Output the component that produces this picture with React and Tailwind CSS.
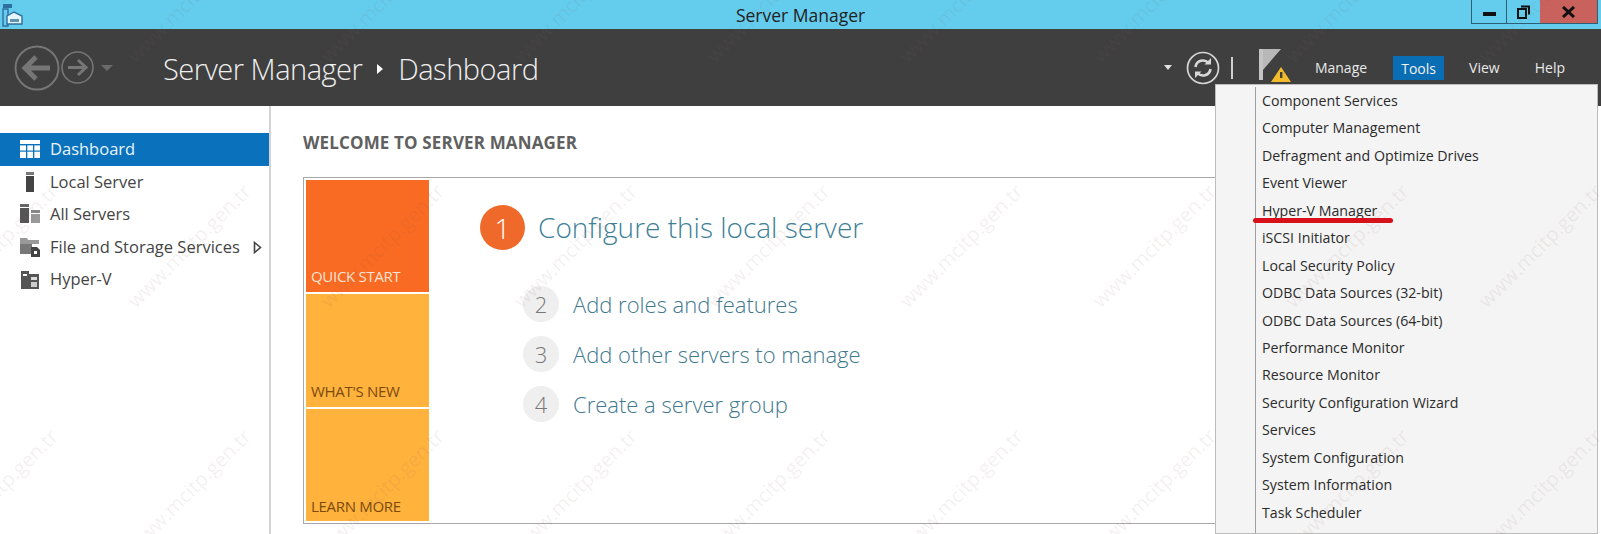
const sansFont = "font-['Open_Sans','Noto_Sans',sans-serif]";

const navItems = [
    { label: "Dashboard", icon: "dashboard", active: true },
    { label: "Local Server", icon: "server" },
    { label: "All Servers", icon: "servers" },
    { label: "File and Storage Services", icon: "files", arrow: true },
    { label: "Hyper-V", icon: "hyperv" },
];

const toolItems = [
    "Component Services",
    "Computer Management",
    "Defragment and Optimize Drives",
    "Event Viewer",
    "Hyper-V Manager",
    "iSCSI Initiator",
    "Local Security Policy",
    "ODBC Data Sources (32-bit)",
    "ODBC Data Sources (64-bit)",
    "Performance Monitor",
    "Resource Monitor",
    "Security Configuration Wizard",
    "Services",
    "System Configuration",
    "System Information",
    "Task Scheduler",
];

const steps = [
    { n: 2, label: "Add roles and features" },
    { n: 3, label: "Add other servers to manage" },
    { n: 4, label: "Create a server group" },
];

function NavIcon({ name, active }) {
    const c = active ? "#ffffff" : "#555555";
    if (name === "dashboard") {
        return (
            <svg width="20" height="20" viewBox="0 0 20 20">
                <rect x="0" y="1" width="20" height="18" fill={c} />
                <g fill="#0a72bd">
                    <rect x="0" y="5" width="20" height="1.4" />
                    <rect x="0" y="11.5" width="20" height="1.2" />
                    <rect x="6" y="5" width="1.3" height="14" />
                    <rect x="13" y="5" width="1.3" height="14" />
                </g>
            </svg>
        );
    }
    if (name === "server") {
        return (
            <svg width="20" height="20" viewBox="0 0 20 20">
                <rect x="6" y="0" width="8" height="3" fill="#777777" />
                <rect x="6" y="4" width="8" height="16" fill="#444444" />
            </svg>
        );
    }
    if (name === "servers") {
        return (
            <svg width="20" height="20" viewBox="0 0 20 20">
                <rect x="0" y="0" width="9" height="3" fill="#666666" />
                <rect x="0" y="4" width="9" height="15" fill="#555555" />
                <rect x="11" y="6" width="9" height="3" fill="#888888" />
                <rect x="11" y="10" width="9" height="9" fill="#999999" />
            </svg>
        );
    }
    if (name === "files") {
        return (
            <svg width="20" height="20" viewBox="0 0 20 20">
                <path d="M0 1h7l1 2h11v4H0z" fill="#999999" />
                <rect x="0" y="7" width="12" height="10" fill="#777777" />
                <path d="M11 10h6l3 3v7h-9z" fill="#444444" />
                <rect x="14" y="14" width="3" height="3" fill="#ffffff" />
            </svg>
        );
    }
    return (
        <svg width="20" height="20" viewBox="0 0 20 20">
            <rect x="1" y="1" width="8" height="18" fill="#555555" />
            <rect x="9" y="4" width="10" height="15" fill="#555555" />
            <rect x="3" y="4" width="4" height="2" fill="#ffffff" />
            <rect x="11" y="7" width="6" height="3" fill="#dddddd" />
            <rect x="11" y="12" width="6" height="5" fill="#cccccc" />
        </svg>
    );
}

function AppIcon() {
    return (
        <svg width="24" height="26" viewBox="0 0 24 26" className="mt-[2px]">
            <rect x="1" y="2" width="9" height="4" fill="#2f6f9f" />
            <path d="M1 7h5v17H1z" fill="none" stroke="#2f6f9f" strokeWidth="1.4" />
            <path d="M5 14l7-4 8 4v8H5z" fill="#e8f6fb" stroke="#2f6f9f" strokeWidth="1.4" />
            <rect x="8" y="17" width="9" height="3" fill="#5f93b0" />
        </svg>
    );
}

function BackButton() {
    return (
        <svg width="46" height="46" viewBox="0 0 46 46" fill="none" stroke="#767676">
            <circle cx="23" cy="23" r="21.5" strokeWidth="2" />
            <path d="M36 23H12M22 12 11 23l11 11" strokeWidth="5" />
        </svg>
    );
}

function ForwardButton() {
    return (
        <svg width="33" height="33" viewBox="0 0 33 33" fill="none" stroke="#767676">
            <circle cx="16.5" cy="16.5" r="15.5" strokeWidth="1.6" />
            <path d="M7 16.5h18M17 9l8 7.5-8 7.5" strokeWidth="3" />
        </svg>
    );
}

function RefreshButton() {
    return (
        <svg width="34" height="34" viewBox="0 0 34 34" fill="none" stroke="#d8d8d8">
            <circle cx="17" cy="17" r="15.5" strokeWidth="1.7" />
            <path d="M9.5 16a7.5 7.5 0 0 1 13-4" strokeWidth="2.6" />
            <path d="M24.5 18a7.5 7.5 0 0 1-13 4" strokeWidth="2.6" />
            <path d="M25 7v6.5h-6.5z" fill="#d8d8d8" stroke="none" />
            <path d="M9 27v-6.5h6.5z" fill="#d8d8d8" stroke="none" />
        </svg>
    );
}

function FlagIcon() {
    return (
        <svg width="36" height="34" viewBox="0 0 36 34">
            <rect x="1" y="1" width="4" height="31" fill="#c4c4c4" />
            <path d="M5 1h18L5 22z" fill="#b8b8b8" />
            <path d="M23 19l10 15H13z" fill="#f2bb2c" />
            <rect x="22" y="24" width="2.4" height="6" fill="#3f3f3f" />
        </svg>
    );
}

function Watermark() {
    return (
        <div className="absolute inset-0 overflow-hidden pointer-events-none z-30">
            <div className="grid grid-cols-[repeat(9,193px)] auto-rows-[245px] -ml-[100px] -mt-[122px]">
                {Array.from({ length: 36 }).map((_, i) => (
                    <div key={i} className="flex items-center justify-center">
                        <span
                            className={`-rotate-45 whitespace-nowrap text-[20px] text-[#8a6060]/10 ${sansFont}`}
                        >
                            www.mcitp.gen.tr
                        </span>
                    </div>
                ))}
            </div>
        </div>
    );
}

export default function App() {
    return (
        <div
            className={`relative w-[1601px] h-[534px] overflow-hidden bg-white flex flex-col ${sansFont}`}
        >
            {/* title bar */}
            <div className="relative h-[29px] shrink-0 bg-[#64cdee] flex items-start pl-[2px]">
                <AppIcon />
                <div className="absolute inset-x-0 top-[3px] text-center text-[17.5px] leading-[25px] text-[#222222]">
                    Server Manager
                </div>
                <div className="absolute right-[3px] top-0 flex h-[24px] border border-t-0 border-[#2d5f75]">
                    <div className="w-[35px] flex items-center justify-center border-r border-[#2d5f75]">
                        <div className="w-[13px] h-[4px] bg-[#111111] mt-[4px]" />
                    </div>
                    <div className="w-[33px] flex items-center justify-center">
                        <svg width="13" height="14" viewBox="0 0 13 14" fill="none" stroke="#111111">
                            <rect x="1" y="4" width="8" height="9" strokeWidth="2" />
                            <path d="M4 1.5h8v8" strokeWidth="2" />
                        </svg>
                    </div>
                    <div className="w-[57px] bg-[#c9625c] flex items-center justify-center">
                        <svg width="13" height="12" viewBox="0 0 13 12" stroke="#111111" strokeWidth="3">
                            <path d="M1 1l11 10M12 1 1 11" />
                        </svg>
                    </div>
                </div>
            </div>

            {/* header */}
            <div className="h-[77px] shrink-0 bg-[#3f3f3f] flex items-center pl-[14px] pr-[36px] text-[#e9e9e9]">
                <BackButton />
                <div className="ml-[1px]">
                    <ForwardButton />
                </div>
                <div className="ml-[7px] w-0 h-0 border-x-[6px] border-x-transparent border-t-[6px] border-t-[#6a6a6a]" />
                <div className="ml-[50px] pt-[2px] flex items-center text-[29px] font-light tracking-[-0.5px] text-[#efefef]">
                    <span>Server Manager</span>
                    <span className="mx-[15px] w-0 h-0 border-y-[5px] border-y-transparent border-l-[6px] border-l-white" />
                    <span>Dashboard</span>
                </div>
                <div className="ml-auto flex items-center">
                    <div className="w-0 h-0 border-x-[4px] border-x-transparent border-t-[5px] border-t-[#e0e0e0]" />
                    <div className="ml-[14px]">
                        <RefreshButton />
                    </div>
                    <div className="ml-[11px] w-[2px] h-[22px] bg-[#cfcfcf]" />
                    <div className="ml-[25px] mt-[-6px]">
                        <FlagIcon />
                    </div>
                    <div className="ml-[21px] text-[14px] leading-[24px] pt-[1px]">Manage</div>
                    <div className="ml-[26px] w-[51px] h-[24px] bg-[#0a6eb4] text-center text-[14px] leading-[25px] text-[#f2f2f2]">
                        Tools
                    </div>
                    <div className="ml-[25px] text-[14px] leading-[24px] pt-[1px]">View</div>
                    <div className="ml-[35px] text-[14px] leading-[24px] pt-[1px]">Help</div>
                </div>
            </div>

            {/* body */}
            <div className="flex flex-1 min-h-0">
                <div className="w-[271px] shrink-0 border-r-2 border-[#d4d4d4] pt-[27px]">
                    {navItems.map((item) => (
                        <div
                            key={item.label}
                            className={`h-[32.6px] flex items-center pl-[20px] pr-[7px] text-[16.5px] ${
                                item.active ? "bg-[#0a72bd] text-[#e8f4fb]" : "text-[#444444]"
                            }`}
                        >
                            <NavIcon name={item.icon} active={item.active} />
                            <span className="ml-[10px]">{item.label}</span>
                            {item.arrow && (
                                <svg width="9" height="13" viewBox="0 0 9 13" className="ml-auto">
                                    <path d="M1.5 1.5 7.5 6.5 1.5 11.5z" fill="#ffffff" stroke="#444444" strokeWidth="1.6" />
                                </svg>
                            )}
                        </div>
                    ))}
                </div>

                <div className="flex-1 pl-[32px] pt-[26px] pr-[60px]">
                    <h1 className="text-[17px] leading-[22px] font-bold tracking-[0.15px] text-[#606060]">
                        WELCOME TO SERVER MANAGER
                    </h1>
                    <div className="mt-[23px] h-[347px] w-[1100px] border border-[#a8a8a8] p-[2px] flex">
                        <div className="w-[123px] shrink-0 flex flex-col gap-[2px] text-[15px] tracking-[-0.3px]">
                            <div className="h-[113px] bg-[#f96a22] flex items-end px-[5px] pb-[5px] text-[#fbe3d5]">
                                QUICK START
                            </div>
                            <div className="h-[113px] bg-[#ffb23c] flex items-end px-[5px] pb-[4px] text-[#7a4a10]">
                                WHAT'S NEW
                            </div>
                            <div className="h-[113px] bg-[#ffb23c] flex items-end px-[5px] pb-[4px] text-[#7a4a10]">
                                LEARN MORE
                            </div>
                        </div>
                        <div className="pl-[51px] pt-[25px]">
                            <div className="flex items-center">
                                <div className="w-[45px] h-[45px] rounded-full bg-[#ef6a2a] flex items-center justify-center text-[28px] font-light text-white">
                                    1
                                </div>
                                <div className="ml-[13px] text-[28px] leading-[45px] font-light text-[#3e7f97]">
                                    Configure this local server
                                </div>
                            </div>
                            <div className="mt-[36px] ml-[43px] flex flex-col gap-[14px]">
                                {steps.map((step) => (
                                    <div key={step.n} className="flex items-center">
                                        <div className="w-[36px] h-[36px] rounded-full bg-[#efefef] flex items-center justify-center text-[22px] font-light text-[#777777]">
                                            {step.n}
                                        </div>
                                        <div className="ml-[14px] text-[22px] leading-[36px] font-light text-[#41788e]">
                                            {step.label}
                                        </div>
                                    </div>
                                ))}
                            </div>
                        </div>
                    </div>
                </div>
            </div>

            {/* tools menu */}
            <div className="absolute left-[1215px] top-[84px] w-[383px] h-[450px] z-20 bg-[#f4f4f4] border border-[#bcbcbc] pl-[39px] pt-[2px]">
                <div className="border-l border-[#a0a0a0] h-full pl-[6px] text-[14.2px] text-[#2b2b2b]">
                    {toolItems.map((tool) => (
                        <div key={tool} className="relative h-[27.45px] leading-[27px] whitespace-nowrap">
                            {tool}
                            {tool === "Hyper-V Manager" && (
                                <div className="absolute left-[-9px] top-[21px] w-[140px] h-[5px] rounded-full bg-[#d8101a]" />
                            )}
                        </div>
                    ))}
                </div>
            </div>

            <Watermark />
        </div>
    );
}
